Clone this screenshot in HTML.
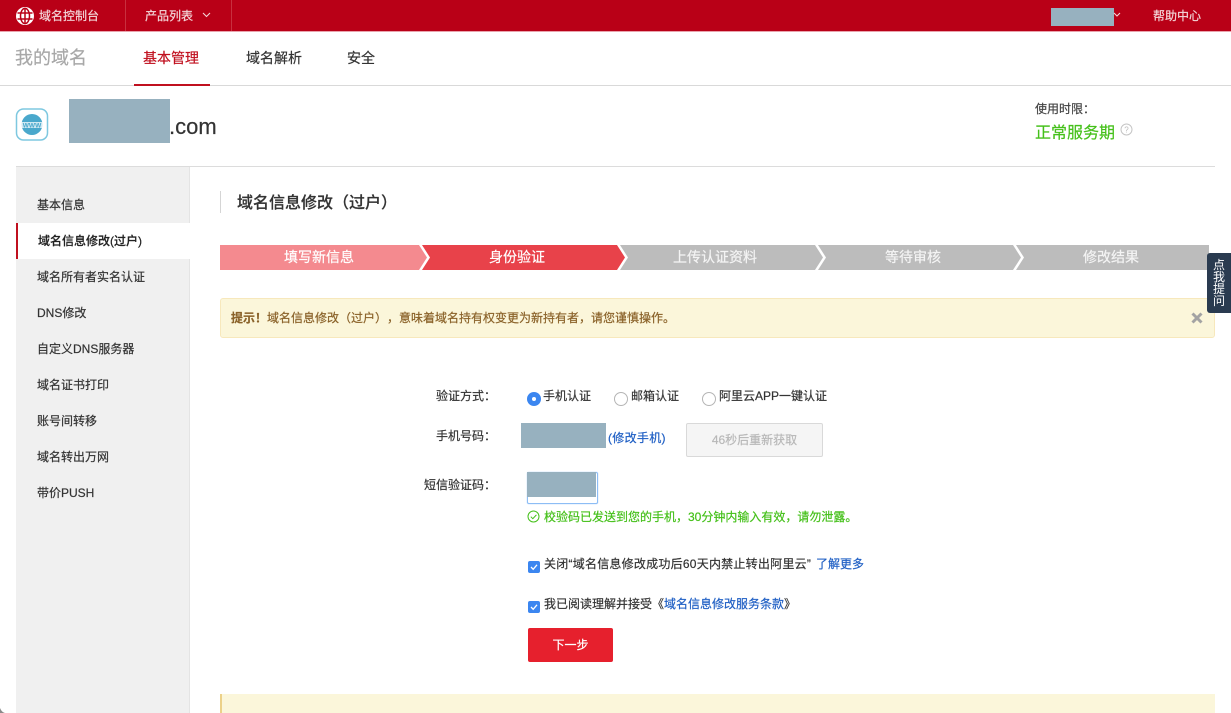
<!DOCTYPE html>
<html lang="zh-CN"><head><meta charset="utf-8"><title>域名信息修改</title>
<style>
html,body{margin:0;padding:0;width:1231px;height:713px;overflow:hidden;background:#fff}
body{position:relative;font-family:"Liberation Sans","Noto Sans CJK SC",sans-serif;color:#333;text-spacing-trim:space-all;-webkit-text-stroke:.2px currentColor}
.a{position:absolute;white-space:nowrap}
.t{position:absolute;white-space:nowrap;line-height:20px;font-size:12px}
.blur{position:absolute;background:#97b1bf}
.m{position:absolute;left:37px;font-size:12px;line-height:20px;color:#333;white-space:nowrap}
.lnk{color:#1f5fc4}
.radio{position:absolute;width:12px;height:12px;border:1px solid #b5b5b5;border-radius:50%;background:#fff}
.cb{position:absolute;width:12px;height:12px;border-radius:2px;background:#3b86f0}
</style></head><body>
<div class="a" style="left:0;top:0;width:1231px;height:31px;background:#b90017"></div>
<div class="a" style="left:0;top:31px;width:1231px;height:1px;background:#e9a3ad"></div>
<div class="a" style="left:125px;top:0;width:1px;height:31px;background:#c8303f"></div>
<div class="a" style="left:231px;top:0;width:1px;height:31px;background:#c8303f"></div>
<svg class="a" style="left:16px;top:7px" width="18" height="18" viewBox="0 0 18 18"><circle cx="9" cy="9" r="9" fill="#fff"/><g fill="none" stroke="#b90017" stroke-width="1.500"><ellipse cx="9" cy="9" rx="4.500" ry="7.600"/><path d="M9 1v16M1.500 6h15M1.500 12h15"/></g></svg>
<div class="t" style="left:39px;top:6px;color:#f3d5d8">域名控制台</div>
<div class="t" style="left:145px;top:6px;color:#f3d5d8">产品列表</div>
<svg class="a" style="left:202px;top:12px" width="9" height="6"><path d="M1 1l3.500 3.500L8 1" fill="none" stroke="#f3d5d8" stroke-width="1.100"/></svg>
<div class="blur" style="left:1051px;top:8px;width:63px;height:18px"></div>
<svg class="a" style="left:1113px;top:12px" width="8" height="6"><path d="M1 1l3 3 3-3" fill="none" stroke="#f3d5d8" stroke-width="1.100"/></svg>
<div class="t" style="left:1153px;top:6px;color:#f3d5d8">帮助中心</div>

<div class="a" style="left:0;top:85px;width:1231px;height:1px;background:#d9d9d9"></div>
<div class="a" style="left:134px;top:84px;width:76px;height:2px;background:#c0101f"></div>
<div class="a" style="left:15px;top:46px;font-size:18px;line-height:24px;color:#a8a8a8">我的域名</div>
<div class="a" style="left:143px;top:48px;font-size:14px;line-height:20px;color:#c0101f">基本管理</div>
<div class="a" style="left:246px;top:48px;font-size:14px;line-height:20px;color:#333">域名解析</div>
<div class="a" style="left:347px;top:48px;font-size:14px;line-height:20px;color:#333">安全</div>

<svg class="a" style="left:15px;top:107px" width="35" height="36" viewBox="0 0 35 36"><rect x="1.500" y="2" width="31" height="31" rx="7" fill="#fff" stroke="#7ec8e0" stroke-width="1.500"/><circle cx="17" cy="17.500" r="10.500" fill="#4aa8cc"/><rect x="5" y="15" width="24" height="6" fill="#fff" opacity=".75"/><text x="17" y="20.500" font-size="6.500" font-weight="700" text-anchor="middle" fill="#4aa8cc" font-family="Liberation Sans">WWW</text></svg>
<div class="blur" style="left:69px;top:99px;width:101px;height:44px"></div>
<div class="a" style="left:169px;top:112px;font-size:22px;line-height:30px;color:#333">.com</div>

<div class="t" style="left:1035px;top:99px;color:#444">使用时限：</div>
<div class="a" style="left:1035px;top:122px;font-size:16px;line-height:24px;color:#45c01a">正常服务期</div>
<svg class="a" style="left:1120px;top:123px" width="13" height="13"><circle cx="6.500" cy="6.500" r="5.500" fill="none" stroke="#c4c4c4"/><text x="6.500" y="9.500" font-size="8" text-anchor="middle" fill="#bbb" font-family="Liberation Sans">?</text></svg>

<div class="a" style="left:16px;top:166px;width:1199px;height:1px;background:#dcdcdc"></div>
<div class="a" style="left:16px;top:167px;width:174px;height:546px;background:#f0f0f0;border-right:1px solid #e4e4e4;box-sizing:border-box"></div>
<div class="a" style="left:16px;top:223px;width:174px;height:36px;background:#fff"></div>
<div class="a" style="left:16px;top:223px;width:2px;height:36px;background:#c0101f"></div>
<div class="m" style="top:195px">基本信息</div>
<div class="m" style="left:38px;top:231px;color:#222;font-weight:500">域名信息修改(过户)</div>
<div class="m" style="top:267px">域名所有者实名认证</div>
<div class="m" style="top:303px">DNS修改</div>
<div class="m" style="top:339px">自定义DNS服务器</div>
<div class="m" style="top:375px">域名证书打印</div>
<div class="m" style="top:411px">账号间转移</div>
<div class="m" style="top:447px">域名转出万网</div>
<div class="m" style="top:483px">带价PUSH</div>

<div class="a" style="left:220px;top:191px;width:1px;height:22px;background:#d5d5d5"></div>
<div class="a" style="left:237px;top:192px;font-size:16px;line-height:24px;font-weight:500;color:#333">域名信息修改（过户）</div>

<svg class="a" style="left:220px;top:245px" width="990" height="25" viewBox="0 0 990 25">
<polygon points="0,0 199,0 207,12.500 199,25 0,25" fill="#f48a8f"/>
<polygon points="202,0 397,0 405,12.500 397,25 202,25 210,12.500" fill="#e8424a"/>
<polygon points="400,0 595,0 603,12.500 595,25 400,25 408,12.500" fill="#bcbcbc"/>
<polygon points="598,0 793,0 801,12.500 793,25 598,25 606,12.500" fill="#bcbcbc"/>
<polygon points="796,0 989,0 989,25 796,25 804,12.500" fill="#bcbcbc"/>
</svg>
<div class="a" style="left:284px;top:247px;font-size:14px;line-height:20px;color:#fff">填写新信息</div>
<div class="a" style="left:489px;top:247px;font-size:14px;line-height:20px;color:#fff">身份验证</div>
<div class="a" style="left:673px;top:247px;font-size:14px;line-height:20px;color:#f4f4f4">上传认证资料</div>
<div class="a" style="left:885px;top:247px;font-size:14px;line-height:20px;color:#f4f4f4">等待审核</div>
<div class="a" style="left:1083px;top:247px;font-size:14px;line-height:20px;color:#f4f4f4">修改结果</div>

<div class="a" style="left:220px;top:298px;width:995px;height:40px;box-sizing:border-box;background:#fbf6da;border:1px solid #f7e8bc;border-radius:3px"></div>
<div class="t" style="left:231px;top:308px;color:#8a6229"><b>提示！</b>域名信息修改（过户），意味着域名持有权变更为新持有者，请您谨慎操作。</div>
<svg class="a" style="left:1191px;top:312px" width="12" height="12"><path d="M1.500 1.500l9 9M10.500 1.500l-9 9" stroke="#a3a3a3" stroke-width="3"/></svg>

<div class="a" style="left:1207px;top:253px;width:24px;height:60px;background:#2a3b50;border-radius:3px 0 0 3px"></div>
<div class="a" style="left:1213px;top:259px;width:12px;font-size:12px;line-height:12px;color:#fff;white-space:normal;word-break:break-all;-webkit-text-stroke:0">点我提问</div>

<div class="t" style="left:436px;top:386px;color:#333">验证方式：</div>
<div class="radio" style="left:527px;top:392px;width:14px;height:14px;border:0;background:#3b86f0"></div>
<div class="a" style="left:532px;top:397px;width:4px;height:4px;border-radius:50%;background:#fff"></div>
<div class="t" style="left:543px;top:386px">手机认证</div>
<div class="radio" style="left:614px;top:392px"></div>
<div class="t" style="left:631px;top:386px">邮箱认证</div>
<div class="radio" style="left:702px;top:392px"></div>
<div class="t" style="left:719px;top:386px">阿里云APP一键认证</div>

<div class="t" style="left:436px;top:426px">手机号码：</div>
<div class="blur" style="left:521px;top:423px;width:85px;height:25px"></div>
<div class="t lnk" style="left:608px;top:428px;letter-spacing:.3px">(修改手机)</div>
<div class="a" style="left:686px;top:423px;width:137px;height:34px;box-sizing:border-box;background:#f5f5f5;border:1px solid #d9d9d9;border-radius:2px;font-size:12px;line-height:32px;text-align:center;color:#b8b8b8">46秒后重新获取</div>

<div class="t" style="left:424px;top:475px">短信验证码：</div>
<div class="a" style="left:527px;top:472px;width:71px;height:32px;box-sizing:border-box;background:#fff;border:1px solid #8dbdf5;border-radius:2px;box-shadow:0 0 1px #8dbdf5"></div>
<div class="blur" style="left:527px;top:472px;width:69px;height:25px"></div>
<svg class="a" style="left:527px;top:510px" width="13" height="13"><circle cx="6.500" cy="6.500" r="5.500" fill="none" stroke="#45c01a"/><path d="M3.800 6.700l2 2 3.600-3.800" fill="none" stroke="#45c01a"/></svg>
<div class="t" style="left:544px;top:507px;color:#45c01a">校验码已发送到您的手机，30分钟内输入有效，请勿泄露。</div>

<div class="cb" style="left:528px;top:561px"></div>
<svg class="a" style="left:528px;top:561px" width="12" height="12"><path d="M3 6l2.200 2.300L9 3.800" fill="none" stroke="#fff" stroke-width="1.300"/></svg>
<div class="t" style="left:544px;top:554px;letter-spacing:.24px">关闭“域名信息修改成功后60天内禁止转出阿里云”</div>
<div class="t lnk" style="left:816px;top:554px">了解更多</div>
<div class="cb" style="left:528px;top:601px"></div>
<svg class="a" style="left:528px;top:601px" width="12" height="12"><path d="M3 6l2.200 2.300L9 3.800" fill="none" stroke="#fff" stroke-width="1.300"/></svg>
<div class="t" style="left:544px;top:594px">我已阅读理解并接受《<span class="lnk">域名信息修改服务条款</span>》</div>
<div class="a" style="left:528px;top:628px;width:85px;height:34px;background:#e6202d;border-radius:2px;font-size:12px;line-height:34px;text-align:center;color:#fff">下一步</div>

<div class="a" style="left:220px;top:694px;width:995px;height:19px;background:#fbf6da"></div>
<div class="a" style="left:220px;top:694px;width:2px;height:19px;background:#ecd189"></div>
<div class="a" style="left:1215px;top:32px;width:16px;height:681px;background:linear-gradient(to right,#fff,#f6f6f6);z-index:-1"></div>
<svg class="a" style="left:0;top:708px" width="5" height="5"><path d="M0 0L0 5L5 5Q1.500 4 0 0Z" fill="#8a8a8a"/></svg>
</body></html>
